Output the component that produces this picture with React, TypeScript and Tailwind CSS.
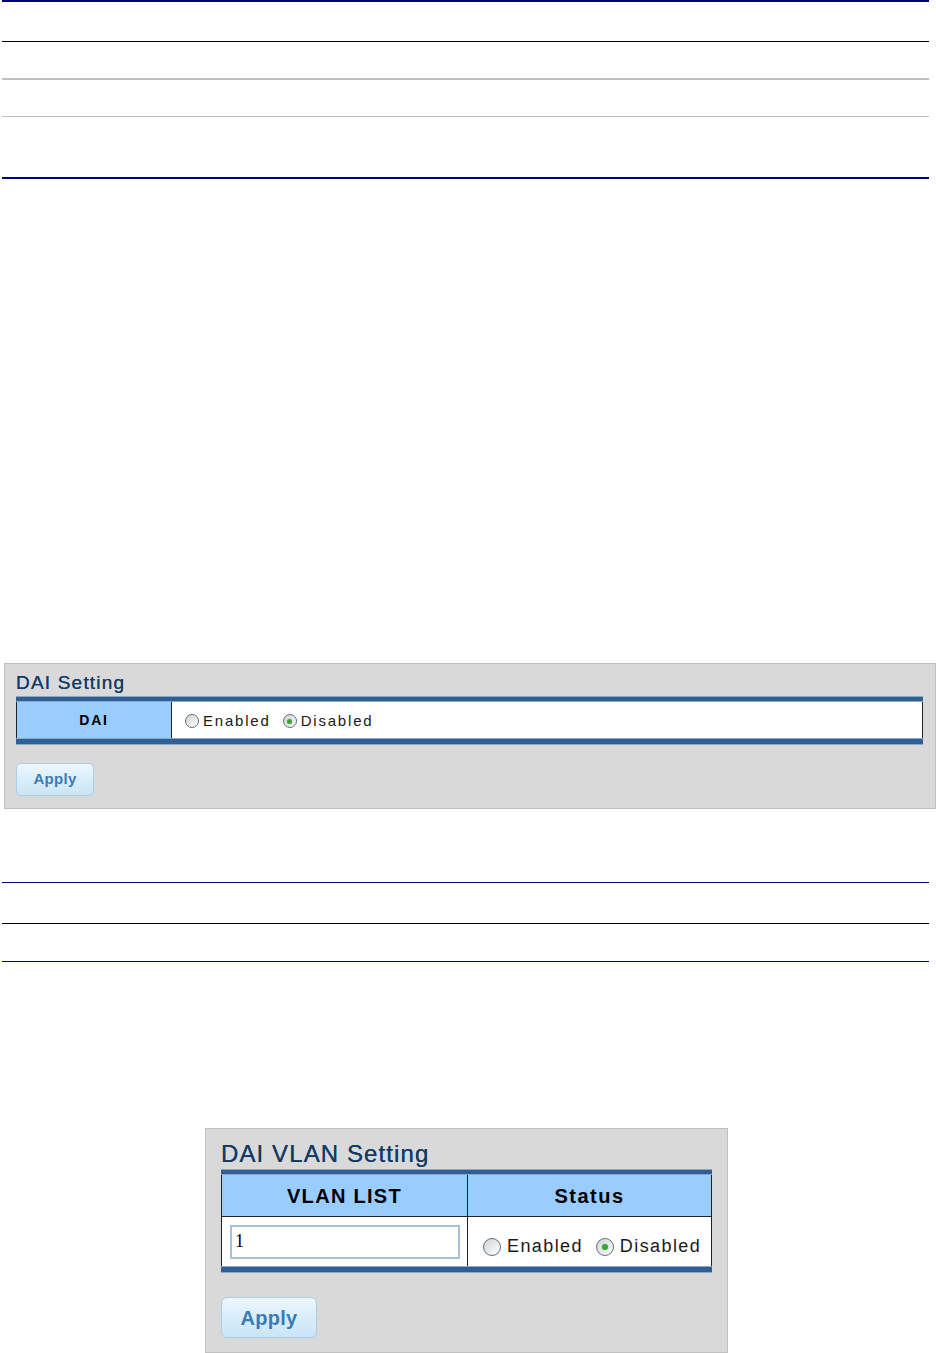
import React from "react";

function Radio({ checked, size }: { checked?: boolean; size: "sm" | "lg" }) {
  const box = size === "sm" ? "w-[14px] h-[14px]" : "w-[18px] h-[18px]";
  const dot = size === "sm" ? "w-[5px] h-[5px]" : "w-[6px] h-[6px]";
  return (
    <span
      className={`${box} flex items-center justify-center rounded-full border border-[#5f6f80] bg-gradient-to-br from-[#d2d2d2] to-[#ffffff] shrink-0`}
    >
      {checked ? <span className={`${dot} rounded-full bg-[#36a836] shadow-[0_0_2px_#8fd88f]`} /> : null}
    </span>
  );
}

function Band({ h }: { h: string }) {
  return <div className={`${h} border-y border-y-[#8ca6c4] bg-[#2f5f95]`} />;
}

function ApplyButton({ size }: { size: "sm" | "lg" }) {
  const cls =
    size === "sm"
      ? "w-[78px] h-[33px] text-[15px] rounded-[5px]"
      : "w-[96px] h-[41px] text-[20px] rounded-[6px]";
  return (
    <button
      className={`${cls} border border-[#a8cfe9] bg-gradient-to-b from-[#eef7fd] via-[#d9edfa] to-[#cbe5f6] font-bold text-[#3a7bb2] tracking-[0.3px] flex items-center justify-center`}
      style={{ fontFamily: '"Liberation Sans", Arial, sans-serif' }}
    >
      Apply
    </button>
  );
}

export default function App() {
  const sans = { fontFamily: '"Liberation Sans", Arial, sans-serif' };
  return (
    <div className="w-[936px] h-[1353px] bg-white relative overflow-hidden" style={sans}>
      {/* top rule group */}
      <div className="ml-[2px] w-[927px] flex flex-col">
        <div className="h-[2px] bg-[#000080]" />
        <div className="h-[39px]" />
        <div className="h-[1px] bg-black" />
        <div className="h-[36px]" />
        <div className="h-[2px] bg-[#c0c0c0]" />
        <div className="h-[36px]" />
        <div className="h-[1px] bg-[#c0c0c0]" />
        <div className="h-[60px]" />
        <div className="h-[2px] bg-[#000080]" />
      </div>

      {/* DAI Setting panel */}
      <div className="ml-[4px] mt-[484px] w-[932px] h-[146px] border border-[#c0c0c0] bg-[#d9d9d9] pl-[11px] pt-[8px] flex flex-col">
        <div className="text-[19px] leading-[22px] tracking-[1.2px] text-[#143a66] h-[22px] [text-shadow:0_0_0.4px_#143a66]">DAI Setting</div>
        <div className="mt-[2px] w-[907px] flex flex-col">
          <Band h="h-[6px]" />
          <div className="flex h-[36px] border-x border-x-[#222]">
            <div className="w-[155px] bg-[#99ccff] border-r border-r-[#222] flex items-center justify-center text-[14px] font-bold tracking-[1.8px] text-black pt-[1px]">
              DAI
            </div>
            <div className="flex-1 bg-white flex items-center pl-[13px] pt-[2px] text-[15px] tracking-[1.8px] text-[#1a1a1a]">
              <Radio size="sm" />
              <span className="ml-[4px]">Enabled</span>
              <span className="ml-[12px] flex"><Radio size="sm" checked /></span>
              <span className="ml-[4px]">Disabled</span>
            </div>
          </div>
          <Band h="h-[7px]" />
        </div>
        <div className="mt-[18px]">
          <ApplyButton size="sm" />
        </div>
      </div>

      {/* second rule group */}
      <div className="ml-[2px] mt-[73px] w-[927px] flex flex-col">
        <div className="h-[1px] bg-[#000080]" />
        <div className="h-[40px]" />
        <div className="h-[1px] bg-black" />
        <div className="h-[37px]" />
        <div className="h-[1px] bg-[#000080]" />
      </div>

      {/* DAI VLAN Setting panel */}
      <div className="ml-[205px] mt-[166px] w-[523px] h-[225px] border border-[#c0c0c0] bg-[#d9d9d9] pl-[15px] pt-[11px] flex flex-col">
        <div className="text-[24px] leading-[28px] tracking-[1.1px] text-[#143a66] h-[28px] [text-shadow:0_0_0.5px_#143a66]">DAI VLAN Setting</div>
        <div className="mt-[1px] w-[491px] flex flex-col">
          <Band h="h-[6px]" />
          <div className="flex h-[42px] border-x border-x-[#222] border-b border-b-[#222] bg-[#99ccff]">
            <div className="w-[246px] border-r border-r-[#222] flex items-center justify-center text-[20px] font-bold tracking-[1.3px] text-black pt-[1px]">
              VLAN LIST
            </div>
            <div className="flex-1 flex items-center justify-center text-[20px] font-bold tracking-[1.5px] text-black pt-[1px]">
              Status
            </div>
          </div>
          <div className="flex h-[49px] border-x border-x-[#222] bg-white">
            <div className="w-[246px] border-r border-r-[#222] flex items-center pl-[8px]">
              <div
                className="w-[230px] h-[34px] border-2 border-[#a9bfd6] flex items-center pl-[3px] text-[18px] text-black"
                style={{ fontFamily: '"Liberation Serif", "Times New Roman", serif' }}
              >
                1
              </div>
            </div>
            <div className="flex-1 flex items-center pl-[15px] pt-[10px] text-[18px] tracking-[1.4px] text-[#1a1a1a]">
              <Radio size="lg" />
              <span className="ml-[6px]">Enabled</span>
              <span className="ml-[13px] flex"><Radio size="lg" checked /></span>
              <span className="ml-[6px]">Disabled</span>
            </div>
          </div>
          <Band h="h-[7px]" />
        </div>
        <div className="mt-[24px]">
          <ApplyButton size="lg" />
        </div>
      </div>
    </div>
  );
}
